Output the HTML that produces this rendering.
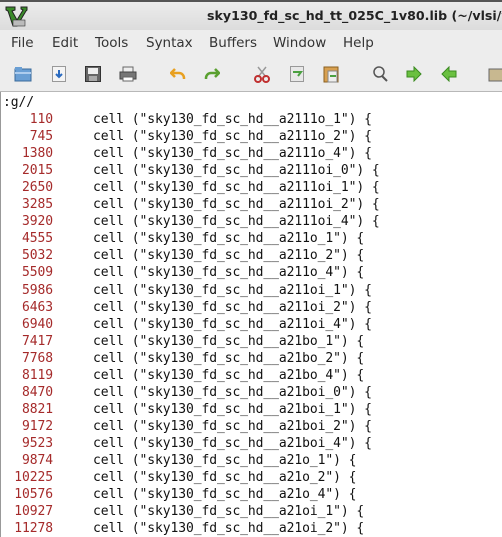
<!DOCTYPE html>
<html><head><style>
body{margin:0;width:502px;height:537px;overflow:hidden;background:#fff;font-family:"DejaVu Sans","Liberation Sans",sans-serif;position:relative}
.title{position:absolute;left:0;top:0;width:502px;height:30px;background:linear-gradient(#ececec,#dcdcdc);border-top:2px solid #555;box-sizing:border-box}
.title span{position:absolute;left:207px;top:6px;font-weight:bold;font-size:12.6px;color:#222;white-space:nowrap}
.menu{position:absolute;top:30px;left:0;width:502px;height:28px;background:#ededed;font-size:13.5px;color:#333}
.menu span{position:absolute;top:5px}
.tb{position:absolute;top:58px;left:0;width:502px;height:33px;background:#ededed;border-bottom:1px solid #b8b8b8}
.sep{position:absolute;top:62px;width:1px;height:26px;background:#ccc}
.ed{position:absolute;top:92px;left:0;width:502px;height:445px;border-left:1px solid #999;background:#fff}
.ln{position:absolute;font-family:"DejaVu Sans Mono",monospace;font-size:13px;white-space:pre;color:#111;letter-spacing:-0.08px}
.n{color:#a52a2a;text-align:right;width:53px;left:0}
.c{left:93px}
</style></head><body>
<div class="title"><svg style="position:absolute;left:4px;top:2px" width="24" height="24" viewBox="0 0 24 24"><path d="M2 3h9v3l-3 1 5 9 6-10-2-1V3h6v3l-1 1-9 15H9L4 7 2 6z" fill="#3a8a2a" stroke="#222" stroke-width="1"/><rect x="9" y="16" width="12" height="6" fill="#bbb" stroke="#333" stroke-width=".6"/></svg><span>sky130_fd_sc_hd_tt_025C_1v80.lib (~/vlsi/vs</span></div>
<div class="menu"><span style="left:11px">File</span><span style="left:52px">Edit</span><span style="left:95px">Tools</span><span style="left:146px">Syntax</span><span style="left:209px">Buffers</span><span style="left:273px">Window</span><span style="left:343px">Help</span></div>
<div class="tb">
<svg style="position:absolute;left:14px;top:8px" width="18" height="16"><rect x="1" y="3" width="16" height="12" fill="#6a9fd4" stroke="#3a6a9a"/><rect x="1" y="1" width="7" height="3" fill="#6a9fd4"/><rect x="1" y="6" width="16" height="2" fill="#aecdee"/></svg>
<svg style="position:absolute;left:52px;top:8px" width="14" height="16"><rect x=".5" y=".5" width="13" height="15" fill="#f4f4f4" stroke="#999"/><path d="M7 4v7M4 8l3 3 3-3" stroke="#2a6ac0" stroke-width="2" fill="none"/></svg>
<svg style="position:absolute;left:85px;top:8px" width="16" height="16"><rect x=".5" y=".5" width="15" height="15" fill="#666" stroke="#333"/><rect x="3" y="2" width="10" height="6" fill="#eee"/><rect x="4" y="10" width="8" height="5" fill="#aaa"/></svg>
<svg style="position:absolute;left:119px;top:8px" width="18" height="16"><rect x="4" y="1" width="10" height="5" fill="#eee" stroke="#666"/><rect x="1" y="6" width="16" height="7" fill="#777" stroke="#444"/><rect x="4" y="11" width="10" height="4" fill="#fff" stroke="#666"/></svg>
<div class="sep" style="left:152px"></div>
<svg style="position:absolute;left:170px;top:8px" width="16" height="16"><path d="M5 3L1 7l4 4M2 7h7a5 5 0 0 1 5 5v1" stroke="#e8a020" stroke-width="2.5" fill="none"/></svg>
<svg style="position:absolute;left:204px;top:8px" width="16" height="16"><path d="M11 3l4 4-4 4M14 7H7a5 5 0 0 0-5 5v1" stroke="#5aa030" stroke-width="2.5" fill="none"/></svg>
<div class="sep" style="left:236px"></div>
<svg style="position:absolute;left:253px;top:7px" width="18" height="18"><path d="M5 2l8 10M13 2L5 12" stroke="#999" stroke-width="1.5"/><circle cx="5" cy="14" r="3" fill="none" stroke="#c03030" stroke-width="2"/><circle cx="13" cy="14" r="3" fill="none" stroke="#c03030" stroke-width="2"/></svg>
<svg style="position:absolute;left:290px;top:8px" width="14" height="16"><rect x=".5" y=".5" width="13" height="15" fill="#e8e8e8" stroke="#999"/><path d="M3 6h8l-3 4" stroke="#4aa040" stroke-width="2" fill="none"/></svg>
<svg style="position:absolute;left:323px;top:7px" width="16" height="18"><rect x="1" y="2" width="14" height="15" fill="#d8a050" stroke="#8a6020"/><rect x="5" y="6" width="9" height="11" fill="#eee" stroke="#888"/><path d="M7 11h6" stroke="#4aa040" stroke-width="2"/></svg>
<div class="sep" style="left:355px"></div>
<svg style="position:absolute;left:372px;top:7px" width="16" height="18"><circle cx="7" cy="7" r="5" fill="none" stroke="#555" stroke-width="1.5"/><path d="M10 11l5 5" stroke="#555" stroke-width="2"/></svg>
<svg style="position:absolute;left:406px;top:8px" width="16" height="16"><path d="M1 5h7V1l7 7-7 7v-4H1z" fill="#6ac040" stroke="#3a8a20"/></svg>
<svg style="position:absolute;left:441px;top:8px" width="16" height="16"><path d="M15 5H8V1L1 8l7 7v-4h7z" fill="#6ac040" stroke="#3a8a20"/></svg>
<div class="sep" style="left:473px"></div>
<svg style="position:absolute;left:488px;top:8px" width="14" height="16"><rect x="1" y="3" width="14" height="12" fill="#c8b890" stroke="#666"/></svg>
</div>
<div class="ed"></div>
<div class="ln" style="left:3px;top:95px">:g//</div>
<div id="L"></div>
<script>
var d=[["110","a2111o_1"],["745","a2111o_2"],["1380","a2111o_4"],["2015","a2111oi_0"],["2650","a2111oi_1"],["3285","a2111oi_2"],["3920","a2111oi_4"],["4555","a211o_1"],["5032","a211o_2"],["5509","a211o_4"],["5986","a211oi_1"],["6463","a211oi_2"],["6940","a211oi_4"],["7417","a21bo_1"],["7768","a21bo_2"],["8119","a21bo_4"],["8470","a21boi_0"],["8821","a21boi_1"],["9172","a21boi_2"],["9523","a21boi_4"],["9874","a21o_1"],["10225","a21o_2"],["10576","a21o_4"],["10927","a21oi_1"],["11278","a21oi_2"]];
var h="";d.forEach(function(r,i){var t=112+i*17.05;h+='<div class="ln n" style="top:'+t+'px">'+r[0]+'</div><div class="ln c" style="top:'+t+'px">cell ("sky130_fd_sc_hd__'+r[1]+'") {</div>';});
document.getElementById("L").innerHTML=h;
</script>
</body></html>
